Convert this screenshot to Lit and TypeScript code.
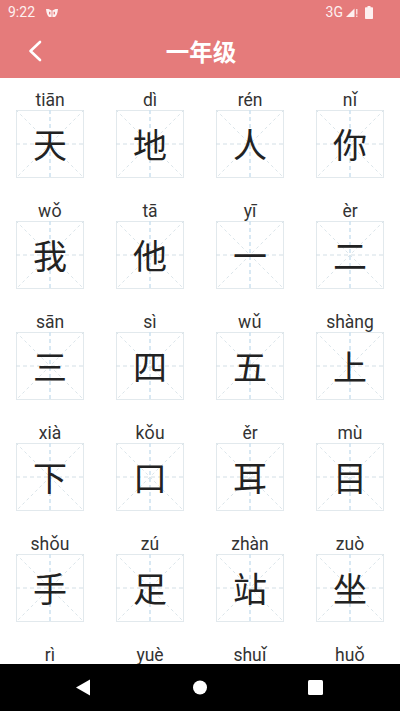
import { LitElement, html, css, svg } from "lit";
import { customElement } from "lit/decorators.js";

const CHARS: [string, string][] = [
  ["tiān", "天"], ["dì", "地"], ["rén", "人"], ["nǐ", "你"],
  ["wǒ", "我"], ["tā", "他"], ["yī", "一"], ["èr", "二"],
  ["sān", "三"], ["sì", "四"], ["wǔ", "五"], ["shàng", "上"],
  ["xià", "下"], ["kǒu", "口"], ["ěr", "耳"], ["mù", "目"],
  ["shǒu", "手"], ["zú", "足"], ["zhàn", "站"], ["zuò", "坐"],
  ["rì", "日"], ["yuè", "月"], ["shuǐ", "水"], ["huǒ", "火"],
];

const guides = svg`
  <line x1="0" y1="0" x2="68" y2="68" stroke="#dbe5ea" stroke-width="1" stroke-dasharray="3 3"></line>
  <line x1="68" y1="0" x2="0" y2="68" stroke="#dbe5ea" stroke-width="1" stroke-dasharray="3 3"></line>
  <line x1="0" y1="34" x2="68" y2="34" stroke="#d3dfe6" stroke-width="1" stroke-dasharray="4 3"></line>
  <line x1="34" y1="0" x2="34" y2="68" stroke="#cfe3f0" stroke-width="1.6" stroke-dasharray="4 3"></line>
`;

@customElement("app-root")
export class AppRoot extends LitElement {
  static styles = css`
    :host {
      display: flex;
      flex-direction: column;
      width: 400px;
      height: 711px;
      overflow: hidden;
      background: #fff;
      font-family: Roboto, "Noto Sans CJK SC", sans-serif;
    }
    .head {
      background: #e57b7b;
      color: #fff;
      flex: none;
      height: 78px;
      display: flex;
      flex-direction: column;
    }
    .status {
      height: 24px;
      display: flex;
      align-items: center;
      padding: 0 27px 0 8px;
      font-size: 14px;
      color: #fdf0f0;
    }
    .time { width: 38px; }
    .spacer { flex: 1; }
    .net { margin-right: 3px; }
    .status svg { display: block; }
    .signal { margin-right: 7px; }
    .bar {
      flex: 1;
      display: flex;
      align-items: center;
      justify-content: center;
      position: relative;
    }
    .title {
      font-family: "Noto Sans CJK SC", sans-serif;
      font-size: 23.5px;
      font-weight: 700;
      line-height: 30px;
      padding-left: 2px;
    }
    .back {
      position: absolute;
      left: 26px;
      top: 15px;
    }
    .list {
      flex: 1;
      min-height: 0;
      overflow: hidden;
      padding-top: 10px;
      display: grid;
      grid-template-columns: repeat(4, 100px);
      grid-auto-rows: 111px;
      align-content: start;
    }
    .cell {
      display: flex;
      flex-direction: column;
      align-items: center;
    }
    .py {
      height: 22px;
      line-height: 24px;
      font-size: 17.5px;
      color: #333;
    }
    .box {
      width: 68px;
      height: 68px;
      position: relative;
      box-sizing: border-box;
      border: 1px solid #e2e9ed;
      display: flex;
      align-items: center;
      justify-content: center;
    }
    .box svg {
      position: absolute;
      left: -1px;
      top: -1px;
    }
    .han {
      position: relative;
      font-family: "Noto Sans CJK SC", sans-serif;
      font-size: 34px;
      line-height: 40px;
      color: #222;
    }
    .nav {
      flex: none;
      height: 47px;
      background: #000;
    }
    .nav svg { display: block; }
  `;

  render() {
    return html`
      <div class="head">
        <div class="status">
          <span class="time">9:22</span>
          <svg width="12" height="9" viewBox="0 0 12 9">
            <path fill="#fdf0f0" d="M0 1 L2.5 1 L5.6 2.6 V9 H3 Q0.6 7 0 1Z M6.4 2.6 L9.5 1 L12 1 Q11.4 7 9 9 H6.4Z"></path>
            <rect x="3" y="3.8" width="1.4" height="2.6" fill="#e57b7b"></rect>
            <rect x="7.6" y="3.8" width="1.4" height="2.6" fill="#e57b7b"></rect>
          </svg>
          <span class="spacer"></span>
          <span class="net">3G</span>
          <svg class="signal" width="12" height="12" viewBox="0 0 12 12">
            <path fill="#fdf0f0" d="M0 11 L8.5 2.5 V11Z"></path>
            <rect x="10.2" y="3" width="1.2" height="5.5" fill="#fdf0f0"></rect>
            <rect x="10.2" y="9.6" width="1.2" height="1.4" fill="#fdf0f0"></rect>
          </svg>
          <svg width="8" height="13" viewBox="0 0 8 13">
            <path fill="#fdf0f0" d="M2.5 0 H5.5 V1.2 H7.2 Q8 1.2 8 2 V12.2 Q8 13 7.2 13 H0.8 Q0 13 0 12.2 V2 Q0 1.2 0.8 1.2 H2.5Z"></path>
          </svg>
        </div>
        <div class="bar">
          <svg class="back" width="18" height="24" viewBox="0 0 18 24">
            <path d="M14 3 L4.5 12 L14 21" fill="none" stroke="#fff" stroke-width="2.6" stroke-linecap="round" stroke-linejoin="round"></path>
          </svg>
          <span class="title">一年级</span>
        </div>
      </div>
      <div class="list">
        ${CHARS.map(
          ([p, c]) => html`
            <div class="cell">
              <div class="py">${p}</div>
              <div class="box">
                <svg width="68" height="68" viewBox="0 0 68 68">${guides}</svg>
                <span class="han">${c}</span>
              </div>
            </div>
          `
        )}
      </div>
      <div class="nav">
        <svg width="400" height="47" viewBox="0 0 400 47">
          <path fill="#fff" d="M90 15.5 V31.5 L76 23.5Z"></path>
          <circle cx="200" cy="23.5" r="7" fill="#fff"></circle>
          <rect x="308" y="16" width="15" height="15" rx="1.5" fill="#fff"></rect>
        </svg>
      </div>
    `;
  }
}
